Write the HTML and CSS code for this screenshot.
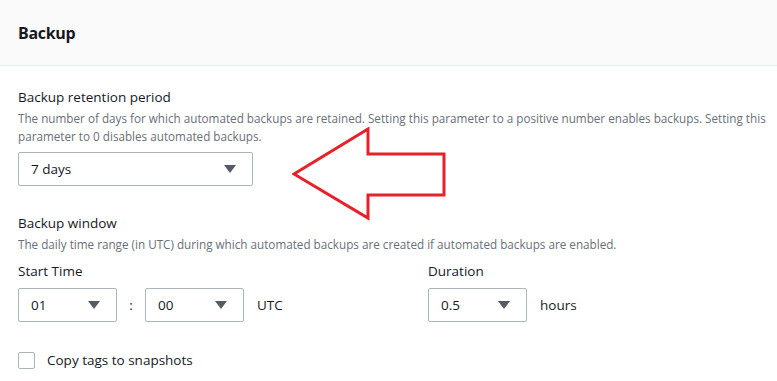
FILE: index.html
```html
<!DOCTYPE html>
<html lang="en">
<head>
  <meta charset="utf-8" />
  <title>Backup</title>
  <link rel="stylesheet" href="styles.css">
</head>
<body>
  <div class="panel">
    <div class="panel-head">
      <h2>Backup</h2>
    </div>
    <div class="panel-body">
      <div class="field">
        <div class="label">Backup retention period</div>
        <div class="desc">The number of days for which automated backups are retained. Setting this parameter to a positive number enables backups. Setting this parameter to 0 disables automated backups.</div>
        <div class="retention-row">
          <div class="select wide"><span>7 days</span><i class="caret"></i></div>
          <svg class="arrow" width="160" height="100" viewBox="0 0 160 100">
            <polygon points="2,47 76,2 76,27 152,27 152,68 76,68 76,91" fill="none" stroke="#e8202a" stroke-width="3" stroke-linejoin="miter" />
          </svg>
        </div>
      </div>

      <div class="field">
        <div class="label">Backup window</div>
        <div class="desc">The daily time range (in UTC) during which automated backups are created if automated backups are enabled.</div>
        <div class="window-row">
          <div class="col">
            <div class="label">Start Time</div>
            <div class="inline">
              <div class="select small"><span>01</span><i class="caret"></i></div>
              <span class="sep">:</span>
              <div class="select small"><span>00</span><i class="caret"></i></div>
              <span class="unit">UTC</span>
            </div>
          </div>
          <div class="col">
            <div class="label">Duration</div>
            <div class="inline">
              <div class="select small"><span>0.5</span><i class="caret"></i></div>
              <span class="unit">hours</span>
            </div>
          </div>
        </div>
      </div>

      <label class="check">
        <span class="box"></span>
        <span>Copy tags to snapshots</span>
      </label>
    </div>
  </div>
</body>
</html>
```

FILE: styles.css
```css
:root {
  --text: #16191f;
  --muted: #687078;
  --border: #aab7b8;
  --line: #eaeded;
}
html, body {
  margin: 0;
  padding: 0;
  background: #fff;
  color: var(--text);
  font-family: "Open Sans", Roboto, Arial, sans-serif;
}
.panel {
  width: 777px;
  height: 381px;
  overflow: hidden;
}
.panel-head {
  background: #fafafa;
  height: 66px;
  border-bottom: 1px solid var(--line);
  box-sizing: border-box;
  padding: 0 18px;
  display: flex;
  align-items: center;
}
.panel-head h2 {
  margin: 0;
  font-size: 16px;
  font-weight: 700;
  letter-spacing: -0.02em;
}
.panel-body {
  padding: 22px 6px 0 18px;
}
.field {
  margin-bottom: 26px;
}
.label {
  font-size: 13.5px;
  line-height: 18px;
  margin-bottom: 3px;
}
.desc {
  font-size: 11.7px;
  line-height: 18px;
  color: var(--muted);
  margin-bottom: 7px;
}
.retention-row {
  display: flex;
  align-items: flex-start;
  height: 36px;
}
.arrow {
  margin: -25px 0 0 39px;
  flex: none;
}
.select {
  height: 34px;
  border: 1px solid var(--border);
  border-radius: 2px;
  box-sizing: border-box;
  display: flex;
  align-items: center;
  justify-content: space-between;
  padding: 0 16px 0 12px;
  font-size: 13.5px;
  background: #fff;
}
.select.wide { width: 235px; }
.select.small { width: 99px; }
.caret {
  width: 0;
  height: 0;
  border-left: 6px solid transparent;
  border-right: 6px solid transparent;
  border-top: 8px solid #545b64;
}
.window-row {
  display: flex;
  margin-top: 9px;
}
.window-row .col:first-child { width: 410px; }
.window-row .label { margin-bottom: 8px; }
.inline {
  display: flex;
  align-items: center;
}
.sep {
  width: 28px;
  text-align: center;
  font-size: 13.5px;
}
.unit {
  margin-left: 13px;
  font-size: 13.5px;
}
.check {
  display: flex;
  align-items: center;
  gap: 12px;
  font-size: 13.5px;
  margin-top: 29px;
}
.box {
  width: 17px;
  height: 17px;
  box-sizing: border-box;
  border: 1px solid var(--border);
  border-radius: 2px;
}
```
